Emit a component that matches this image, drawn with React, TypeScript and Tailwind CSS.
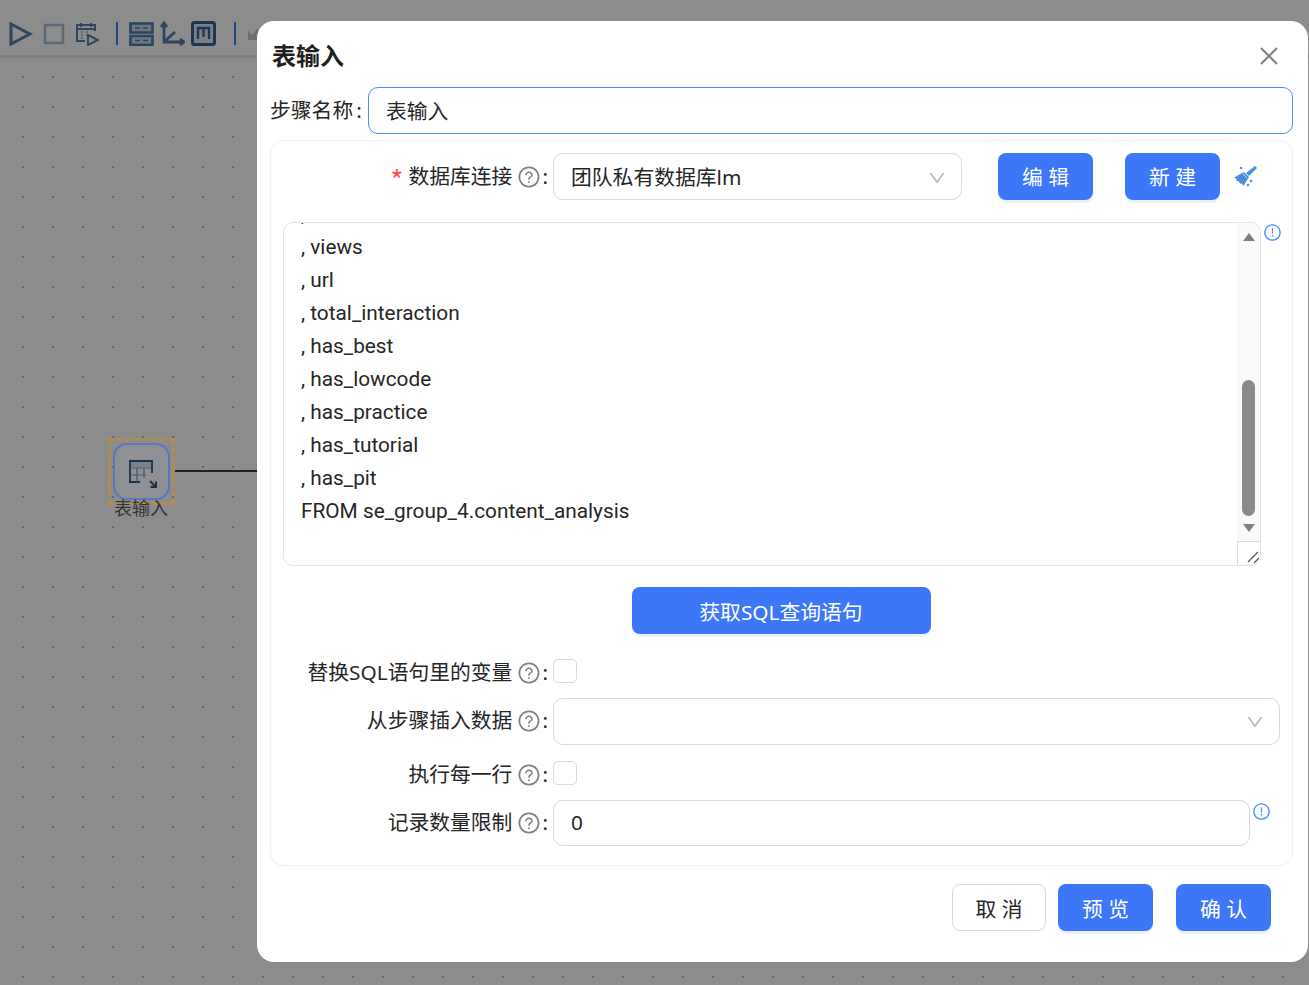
import type { ReactNode } from 'react';
import { AiOutlineClose, AiOutlineDown, AiOutlineExclamationCircle, AiOutlineQuestionCircle } from 'react-icons/ai';

const font = 'font-["Noto_Sans","Noto_Sans_CJK_SC",sans-serif]';

function Toolbar() {
  return (
    <div className="h-[58px] border-b-[3px] border-[#808080] bg-[#8c8c8c] flex items-center pl-[9px] pt-[12px] shrink-0">
      <svg width="24" height="24" viewBox="0 0 24 24" className="mr-[10px]">
        <path d="M2 2 L21 12 L2 22 Z" fill="none" stroke="#2f4560" strokeWidth="3" />
      </svg>
      <svg width="22" height="22" viewBox="0 0 22 22" className="mr-[10px]">
        <rect x="2" y="2" width="18" height="18" fill="none" stroke="#5b6878" strokeWidth="2.5" />
      </svg>
      <svg width="24" height="24" viewBox="0 0 24 24" className="mr-[17px]">
        <path d="M10 19 H2 V3 H20 V9 M6 1 V5 M16 1 V5 M2 7 H20" fill="none" stroke="#2f4560" strokeWidth="2" />
        <path d="M6 10 h2 M11 10 h2 M6 13 h2 M11 13 h2 M6 16 h2" stroke="#4d5f75" strokeWidth="1.6" />
        <path d="M13 13 L23 18 L13 23 Z" fill="none" stroke="#2f4560" strokeWidth="2" />
      </svg>
      <div className="w-[2px] h-[23px] bg-[#1d4785] mr-[11px]" />
      <svg width="25" height="24" viewBox="0 0 25 24" className="mr-[6px]">
        <rect x="1.500" y="1.500" width="22" height="9" fill="#6f7780" stroke="#2b4462" strokeWidth="2.6" />
        <rect x="1.500" y="14" width="22" height="9" fill="#6f7780" stroke="#2b4462" strokeWidth="2.6" />
        <path d="M6 6 h5 M14 6 h5 M6 18.500 h5 M14 18.500 h5" stroke="#2b4462" strokeWidth="1.6" />
      </svg>
      <svg width="25" height="25" viewBox="0 0 25 25" className="mr-[6px]">
        <path d="M4 3 V21 H23 M1 6 L4 2 L7 6 M20 18 L24 21 L20 24 M5 20 L15 11" fill="none" stroke="#2f4560" strokeWidth="2.8" />
      </svg>
      <svg width="25" height="25" viewBox="0 0 25 25" className="mr-[18px]">
        <rect x="1.500" y="1.500" width="22" height="22" rx="2" fill="#7b8088" stroke="#1d3654" strokeWidth="3" />
        <path d="M7 18 V7 H18 V18 M12.500 7 V16" fill="none" stroke="#1d3654" strokeWidth="2.4" />
      </svg>
      <div className="w-[2px] h-[23px] bg-[#1d4785] mr-[12px]" />
      <svg width="12" height="14" viewBox="0 0 12 14">
        <path d="M0 4 L4 8 L10 1 V13 H0 Z" fill="#6e6e6e" />
      </svg>
    </div>
  );
}

function Help() {
  return <AiOutlineQuestionCircle size={24} className="text-[#7f7f7f] ml-[5px] shrink-0" />;
}

function Row({ label, required, children, className, labelClass }: { label: string; required?: boolean; children: ReactNode; className?: string; labelClass?: string }) {
  return (
    <div className={`flex items-center ${className ?? ''}`}>
      <div className={`w-[277px] mr-[5px] flex items-center justify-end text-[20.8px] text-[#262626] shrink-0 ${labelClass ?? ''}`}>
        {required && <span className='text-[#ff4d4f] mr-[5px] text-[28px] leading-none mt-[5px] font-["Noto_Sans_CJK_SC"]'>*</span>}
        <span>{label}</span>
        <Help />
        <span className="ml-[1px]">:</span>
      </div>
      {children}
    </div>
  );
}

function PrimaryButton({ text, className }: { text: string; className?: string }) {
  return (
    <button className={`h-[47px] pt-[3px] rounded-[8px] bg-[#3b77f6] text-white text-[20.8px] shadow-[0_3px_0_rgba(59,119,246,0.1)] ${className ?? ''}`}>
      {text}
    </button>
  );
}

function Checkbox() {
  return <div className="w-[24px] h-[24px] rounded-[5px] border border-[#d9d9d9] bg-white" />;
}

function Broom() {
  return (
    <svg width="24" height="24" viewBox="0 0 24 24" className="ml-[14px] -mt-[1px]">
      <path d="M21 2 L23 4 L15 12 L12 9 Z" fill="#4a90d9" />
      <path d="M10 8 L15 13 L9.500 22 L7.500 19 L6.500 20 L4.500 17 L3 17.500 L2 14.500 L0 13.500 Z" fill="#4a90d9" />
      <path d="M9 10 L13 14" stroke="#dcebf8" strokeWidth="0.7" />
      <circle cx="7" cy="4" r="1.300" fill="#4a90d9" />
      <circle cx="17" cy="17" r="1.300" fill="#4a90d9" />
      <circle cx="14" cy="21" r="1.300" fill="#4a90d9" />
    </svg>
  );
}

function CodeBox() {
  const lines = [', likes', ', views', ', url', ', total_interaction', ', has_best', ', has_lowcode', ', has_practice', ', has_tutorial', ', has_pit', 'FROM se_group_4.content_analysis'];
  return (
    <div className="relative ml-[12px] w-[978px] h-[344px] mt-[22px] rounded-[10px] border border-[#e3e3e3] overflow-hidden flex">
      <div className="flex-1 min-w-0 overflow-hidden pl-[17px]">
        <div className='-mt-[25px] font-["Roboto"] text-[20.8px] leading-[33px] text-[#262626]'>
          {lines.map((l) => (
            <div key={l} className="whitespace-pre">{l}</div>
          ))}
        </div>
      </div>
      <div className="w-[23px] shrink-0 bg-[#fafafa] flex flex-col items-center relative">
        <div className="w-0 h-0 mt-[10px] border-x-[6px] border-x-transparent border-b-[8px] border-b-[#7f7f7f]" />
        <div className="w-[13px] h-[136px] mt-[139px] rounded-full bg-[#8a8a8a]" />
        <div className="w-0 h-0 mt-[8px] border-x-[6px] border-x-transparent border-t-[8px] border-t-[#7f7f7f]" />
        <div className="absolute left-0 bottom-0 w-[23px] h-[24px] bg-white border-l border-t border-[#dcdcdc]">
          <svg width="22" height="23" viewBox="0 0 22 23">
            <path d="M10 20 L20 10 M16 21 L21 16" stroke="#555" strokeWidth="1.3" />
          </svg>
        </div>
      </div>
    </div>
  );
}

function Modal() {
  return (
    <div className={`absolute left-[257px] top-[21px] w-[1051px] h-[941px] rounded-[17px] bg-white pl-[13px] ${font}`}>
      <div className="h-[66px] flex items-center justify-between pl-[2px] pr-[26px] pt-[4px]">
        <div className="text-[24px] font-bold text-[#1f1f1f]">表输入</div>
        <AiOutlineClose size={26} className="text-[#808080]" />
      </div>
      <div className="flex items-center">
        <div className="w-[92px] mr-[6px] text-[20.8px] text-[#262626] whitespace-nowrap">步骤名称<span className="ml-[3px]">:</span></div>
        <div className="w-[925px] h-[47px] pt-[3px] rounded-[10px] border border-[#4b8bf7] flex items-center pl-[17px] text-[20.8px] text-[#262626]">表输入</div>
      </div>
      <div className="mt-[6px] w-[1023px] h-[726px] rounded-[13px] border border-[#f0f0f0] pt-[12px]">
        <Row label="数据库连接" required>
          <div className="w-[409px] h-[47px] rounded-[10px] border border-[#d9d9d9] flex items-center justify-between pl-[17px] pr-[14px] pt-[2px] text-[20.8px] text-[#262626]">
            <span>团队私有数据库lm</span>
            <AiOutlineDown size={20} className="text-[#b5b5b5]" />
          </div>
          <PrimaryButton text="编 辑" className="w-[95px] ml-[36px]" />
          <PrimaryButton text="新 建" className="w-[95px] ml-[32px]" />
          <Broom />
        </Row>
        <div className="flex items-start">
          <CodeBox />
          <AiOutlineExclamationCircle size={19} className="text-[#4a94f5] ml-[2px] mt-[23px]" />
        </div>
        <div className="flex justify-center mt-[21px] pr-[1px]">
          <PrimaryButton text="获取SQL查询语句" className="w-[299px] pt-[4px]" />
        </div>
        <Row label="替换SQL语句里的变量" className="mt-[25px] h-[24px]" labelClass="pt-[4px]">
          <Checkbox />
        </Row>
        <Row label="从步骤插入数据" className="mt-[15px]" labelClass="pb-[2px]">
          <div className="w-[727px] h-[47px] rounded-[10px] border border-[#d9d9d9] flex items-center justify-end pr-[14px]">
            <AiOutlineDown size={20} className="text-[#b5b5b5]" />
          </div>
        </Row>
        <Row label="执行每一行" className="mt-[16px] h-[24px]" labelClass="pt-[3px]">
          <Checkbox />
        </Row>
        <Row label="记录数量限制" className="mt-[15px]">
          <div className="w-[697px] h-[46px] rounded-[10px] border border-[#d9d9d9] flex items-center pl-[17px] text-[20.8px] text-[#262626]">0</div>
          <AiOutlineExclamationCircle size={19} className="text-[#4a94f5] ml-[2px] -mt-[24px]" />
        </Row>
      </div>
      <div className="flex justify-end pr-[37px] mt-[18px]">
        <button className="w-[94px] h-[47px] pt-[5px] rounded-[8px] border border-[#d9d9d9] bg-white text-[20.8px] text-[#262626] mr-[12px]">取 消</button>
        <PrimaryButton text="预 览" className="w-[95px] mr-[23px] pt-[5px]" />
        <PrimaryButton text="确 认" className="w-[95px] pt-[5px]" />
      </div>
    </div>
  );
}

function CanvasNode() {
  return (
    <>
      <div className="absolute left-[108px] top-[438px] w-[67px] h-[67px] border-[3px] border-dashed border-[#b58c4c] flex items-center justify-center">
        <div className="w-[57px] h-[57px] rounded-[14px] border-2 border-[#5878bd] bg-[#8f9095] flex items-center justify-center">
          <svg width="32" height="32" viewBox="0 0 32 32" className="-ml-[2px]">
            <rect x="5" y="5" width="22" height="6" fill="#76838e" />
            <path d="M15 26 H5 V5 H27 V17" fill="none" stroke="#1d3146" strokeWidth="1.800" />
            <path d="M5 12 H26 M5 19 H21 M12 12 V26 M19 12 V22" fill="none" stroke="#45576a" strokeWidth="1.200" />
            <path d="M25 25 L31 31 M31 25.500 V31 H25.500" fill="none" stroke="#1d3146" strokeWidth="2" />
          </svg>
        </div>
      </div>
      <div className={`absolute left-[114px] top-[495px] text-[18px] text-[#333] ${font}`}>表输入</div>
      <div className="absolute left-[175px] top-[470px] w-[82px] h-[1.500px] bg-[#222]" />
    </>
  );
}

export default function App() {
  return (
    <div className="relative w-[1309px] h-[985px] overflow-hidden bg-[#8c8c8c] flex flex-col">
      <Toolbar />
      <div className="flex-1 bg-[radial-gradient(circle,#686868_0.8px,transparent_1px)] bg-[size:30px_30px] bg-[position:8px_4px]" />
      <CanvasNode />
      <Modal />
    </div>
  );
}
